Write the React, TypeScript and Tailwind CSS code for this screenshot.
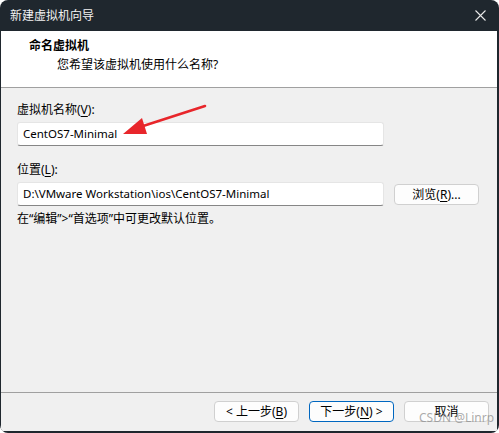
import React from 'react';

const cjk = { fontFamily: '"Segoe UI", "Noto Sans", "Noto Sans CJK SC", sans-serif' };

const U = ({ children }: { children: React.ReactNode }) => (
  <span className="underline underline-offset-2">{children}</span>
);

const Field = ({ value }: { value: string }) => (
  <div className="h-[24px] w-[367px] flex items-center px-[5px] bg-white border border-[#e5e5e5] border-b-[#868686] rounded-[3px] text-[11.5px] text-black">
    {value}
  </div>
);

const Btn = ({
  children,
  primary,
}: {
  children: React.ReactNode;
  primary?: boolean;
}) => (
  <button
    className={`h-[21px] w-[85px] flex items-center justify-center rounded-[4px] text-[12px] text-black bg-[#fdfdfd] border ${
      primary ? 'border-[#0067c0]' : 'border-[#d0d0d0]'
    }`}
  >
    {children}
  </button>
);

export default function App() {
  return (
    <div className="w-[499px] h-[433px] bg-white" style={cjk}>
      <div className="relative w-full h-full bg-[#1f272e] rounded-[8px] pl-px pr-[2px] pb-[2px] flex flex-col overflow-hidden">
        {/* title bar */}
        <div className="h-[31px] flex items-center justify-between pl-[9px] pr-[11px] text-[12px] text-[#f2f2f2]">
          <span>新建虚拟机向导</span>
          <svg width="11" height="11" viewBox="0 0 11 11" className="text-[#e8e8e8]">
            <path d="M0.5 0.5 L10.5 10.5 M10.5 0.5 L0.5 10.5" stroke="currentColor" strokeWidth="1.1" />
          </svg>
        </div>

        {/* header */}
        <div className="h-[57px] bg-white border-b border-[#a0a0a0] pl-[28px] pt-[6px] text-[12px] text-black">
          <div className="font-bold h-[18px] leading-[18px]">命名虚拟机</div>
          <div className="pl-[28px] mt-[1px] h-[18px] leading-[18px]">您希望该虚拟机使用什么名称?</div>
        </div>

        {/* body */}
        <div className="flex-1 bg-[#f0f0f0] pl-[16px] pt-[14px] text-[12px] text-black">
          <div className="h-[16px] leading-[16px]">
            虚拟机名称(<U>V</U>):
          </div>
          <div className="mt-[4px]">
            <Field value="CentOS7-Minimal" />
          </div>
          <div className="mt-[16px] h-[16px] leading-[16px]">
            位置(<U>L</U>):
          </div>
          <div className="mt-[4px] flex items-center gap-[10px]">
            <Field value="D:\VMware Workstation\ios\CentOS7-Minimal" />
            <div className="mt-[1px]">
              <Btn>
                浏览(<U>R</U>)...
              </Btn>
            </div>
          </div>
          <div className="mt-[5px] h-[16px] leading-[16px]">
            在“编辑”&gt;“首选项”中可更改默认位置。
          </div>
        </div>

        {/* footer */}
        <div className="h-[39px] bg-[#f0f0f0] border-t border-[#a0a0a0] flex items-center justify-end gap-[10px] pr-[8px] pb-[1px]">
          <Btn>
            &lt; 上一步(<U>B</U>)
          </Btn>
          <Btn primary>
            下一步(<U>N</U>) &gt;
          </Btn>
          <Btn>取消</Btn>
        </div>

        {/* annotation arrow */}
        <svg className="absolute left-0 top-0 pointer-events-none" width="499" height="433">
          <line x1="205" y1="106" x2="140" y2="127" stroke="#e8262b" strokeWidth="2.6" strokeLinecap="round" />
          <polygon points="123,134 142,118 147,134" fill="#e8262b" />
        </svg>

        {/* watermark */}
        <div className="absolute left-[419px] top-[411px] whitespace-nowrap text-[12px] leading-[14px] text-[#8f8f8f]/75">
          CSDN @Linrp
        </div>
      </div>
    </div>
  );
}
